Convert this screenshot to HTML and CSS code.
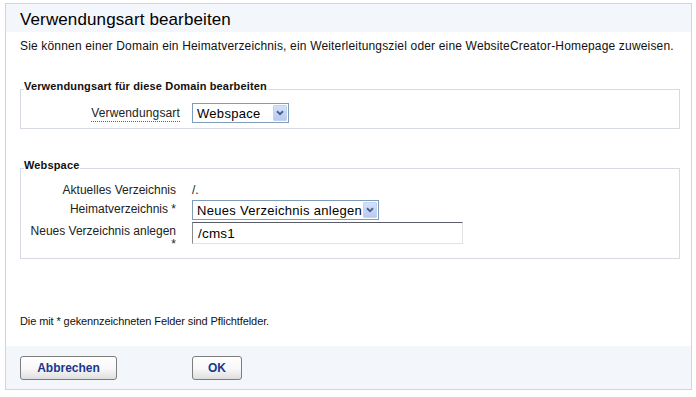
FILE: index.html
```
<!DOCTYPE html>
<html lang="de">
<head>
<meta charset="utf-8">
<title>Verwendungsart bearbeiten</title>
<link rel="stylesheet" href="styles.css">
</head>
<body>
<div class="panel">
  <div class="head"><h1 class="title">Verwendungsart bearbeiten</h1></div>
  <p class="desc">Sie können einer Domain ein Heimatverzeichnis, ein Weiterleitungsziel oder eine WebsiteCreator-Homepage zuweisen.</p>

  <fieldset class="group group-type">
    <legend class="legend">Verwendungsart für diese Domain bearbeiten</legend>
    <div class="grid grid-type">
      <label class="label" for="type"><span class="hint">Verwendungsart</span></label>
      <span class="select-wrap">
        <select id="type" class="select select-type"><option>Webspace</option></select>
        <svg class="arrow" viewBox="0 0 14 16" width="14" height="16" aria-hidden="true"><polyline points="3.5,6 7,9.5 10.5,6" fill="none" stroke="#4d6185" stroke-width="2.2"/></svg>
      </span>
    </div>
  </fieldset>

  <fieldset class="group group-web">
    <legend class="legend">Webspace</legend>
    <div class="grid grid-web">
      <span class="label row-cur">Aktuelles Verzeichnis</span>
      <span class="value row-cur">/.</span>
      <label class="label" for="home">Heimatverzeichnis *</label>
      <span class="select-wrap">
        <select id="home" class="select select-home"><option>Neues Verzeichnis anlegen</option></select>
        <svg class="arrow" viewBox="0 0 14 16" width="14" height="16" aria-hidden="true"><polyline points="3.5,6 7,9.5 10.5,6" fill="none" stroke="#4d6185" stroke-width="2.2"/></svg>
      </span>
      <label class="label label-wrap" for="newdir">Neues Verzeichnis anlegen *</label>
      <input id="newdir" class="input" type="text" value="/cms1">
    </div>
  </fieldset>

  <p class="note">Die mit * gekennzeichneten Felder sind Pflichtfelder.</p>

  <div class="foot">
    <button class="btn btn-cancel" type="button">Abbrechen</button>
    <button class="btn btn-ok" type="button">OK</button>
  </div>
</div>
</body>
</html>
```
FILE: styles.css
```
* { box-sizing: border-box; }
html, body { margin: 0; padding: 0; background: #fff; }
body {
  font-family: "Liberation Sans", Arial, sans-serif;
  font-size: 12px;
  color: #1a1a1a;
}
.panel {
  margin: 3px 0 0 5px;
  width: 687px;
  border: 1px solid #cdd5e1;
  background: #fff;
}
.head {
  height: 28px;
  background: #f3f6fa;
  padding: 4px 0 0 14px;
}
.title {
  margin: 0;
  font-size: 17px;
  line-height: 24px;
  font-weight: normal;
  letter-spacing: 0.12px;
  color: #000;
}
.desc {
  margin: 7px 0 0 0;
  padding: 0 14px;
  font-size: 12px;
  line-height: 14px;
  letter-spacing: 0.17px;
  color: #111;
}
.group {
  margin: 0 11px 0 14px;
  border: 1px solid #d6dae3;
  padding: 0 0 0 5px;
  min-width: 0;
}
.group-type { margin-top: 27px; padding-top: 4px; padding-bottom: 5px; }
.group-web { margin-top: 30px; padding-top: 4px; padding-bottom: 7px; }
.legend {
  margin-left: -2px;
  padding: 0 1px 6px 0;
  font-size: 11px;
  line-height: 13px;
  font-weight: bold;
  letter-spacing: 0.15px;
  color: #111;
}
.grid {
  display: grid;
  align-items: center;
}
.grid-type { grid-template-columns: 154px auto; column-gap: 12px; justify-content: start; }
.grid-web { grid-template-columns: 150px auto; column-gap: 16px; row-gap: 1px; justify-content: start; }
.label {
  text-align: right;
  color: #222;
  line-height: 13px;
}
.hint { border-bottom: 1px dotted #666; padding-bottom: 1px; letter-spacing: 0.15px; }
.row-cur { line-height: 16px; }
.value { color: #222; }
.label-wrap { align-self: start; padding-top: 4px; }
.select-wrap {
  position: relative;
  display: inline-block;
  justify-self: start;
}
.select {
  appearance: none;
  -webkit-appearance: none;
  display: block;
  height: 20px;
  border: 1px solid #7f9db9;
  border-radius: 0;
  background: #fff;
  padding: 0 14px 0 4px;
  font-family: "Liberation Sans", Arial, sans-serif;
  font-size: 13px;
  letter-spacing: 0.3px;
  color: #000;
  margin: 0;
}
.select-type { width: 97px; }
.select-home { width: 187px; }
.grid-web .select-wrap { margin-top: 1px; }
.arrow {
  position: absolute;
  right: 2px;
  top: 2px;
  width: 14px;
  height: 16px;
  background: linear-gradient(#d4e1fb, #b7caf1);
  border: 1px solid #c3d3f4;
  border-radius: 1px;
  pointer-events: none;
}
.input {
  justify-self: start;
  width: 271px;
  height: 22px;
  margin: 1px 0 0 0;
  border: 1px solid;
  border-color: #5a5e68 #e2e2e2 #e2e2e2 #8a8a8a;
  padding: 0 5px;
  font-family: "Liberation Sans", Arial, sans-serif;
  font-size: 13.5px;
  letter-spacing: 0.2px;
  color: #000;
  align-self: start;
}
.note {
  margin: 56px 0 0 0;
  padding: 0 14px;
  font-size: 11px;
  line-height: 13px;
  letter-spacing: -0.1px;
  color: #111;
}
.foot {
  margin-top: 18px;
  background: #f3f6fa;
  padding: 10px 14px 9px;
  display: flex;
  gap: 75px;
}
.btn {
  height: 24px;
  border: 1px solid #7d7d7d;
  border-radius: 3px;
  background: linear-gradient(#ffffff 0%, #f7f7f7 55%, #dedede 100%);
  font-family: "Liberation Sans", Arial, sans-serif;
  font-size: 12px;
  font-weight: bold;
  color: #1b3690;
  padding: 0;
  margin: 0;
}
.btn-cancel { width: 97px; }
.btn-ok { width: 50px; }
```
